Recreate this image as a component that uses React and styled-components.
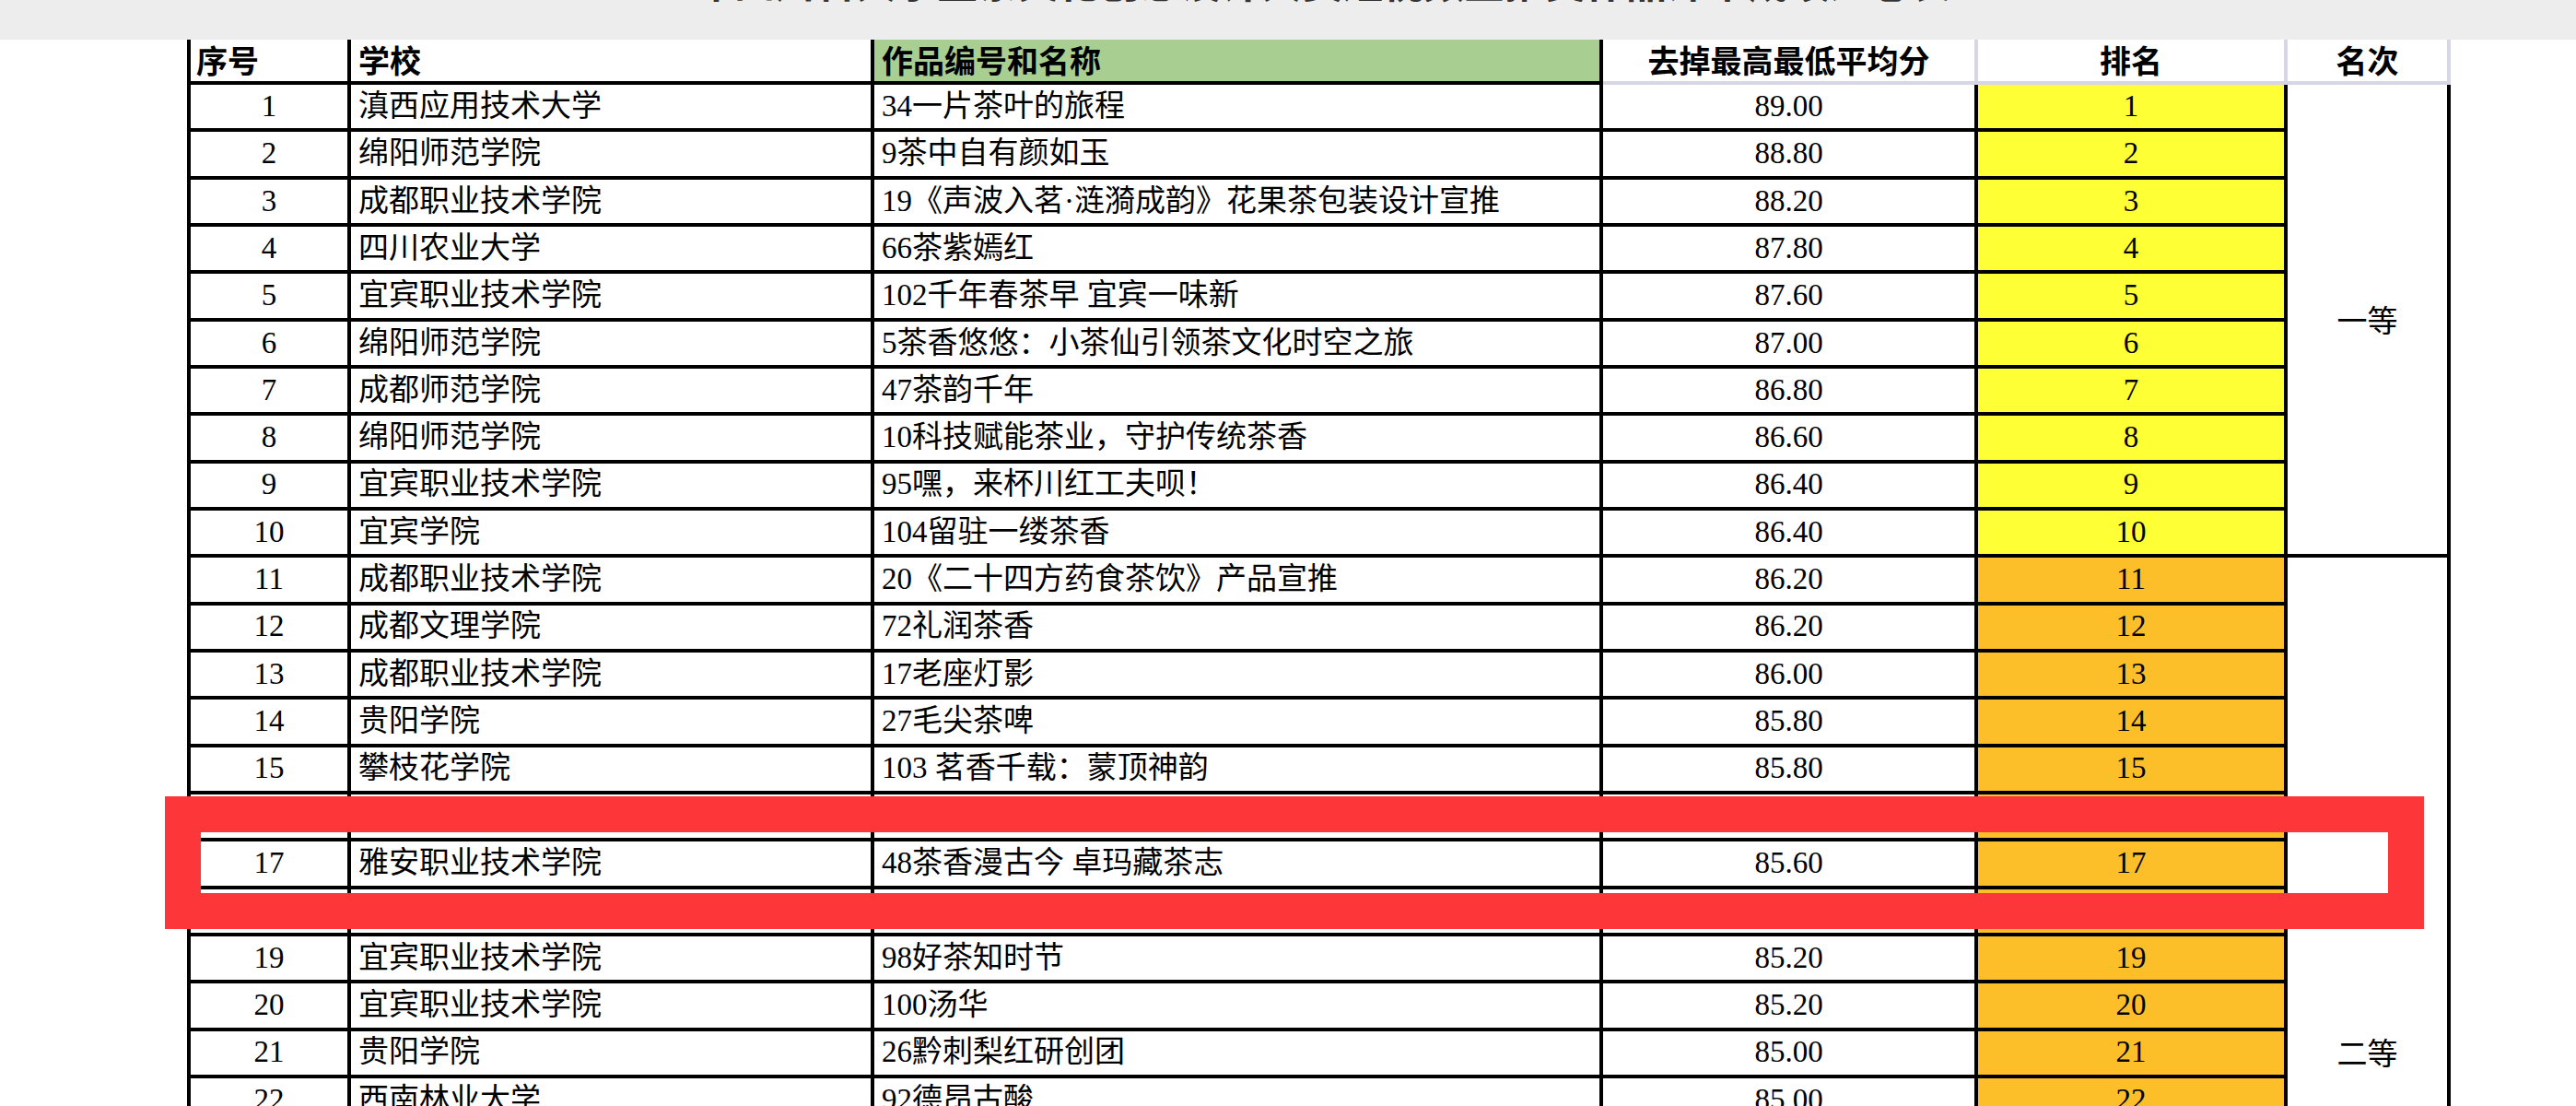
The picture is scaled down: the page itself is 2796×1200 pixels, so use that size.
import React from "react";
import styled, { createGlobalStyle } from "styled-components";

const GlobalStyle = createGlobalStyle`
  html, body {
    margin: 0;
    padding: 0;
    background: #fff;
    overflow: hidden;
  }
  body {
    font-family: "Liberation Serif", "Noto Sans CJK SC", serif;
    color: #000;
  }
`;

const LINE = "#000";
const SOFT = "#d6d6e4";

const rows = [
  { no: 1, school: "滇西应用技术大学", work: "34一片茶叶的旅程", score: "89.00" },
  { no: 2, school: "绵阳师范学院", work: "9茶中自有颜如玉", score: "88.80" },
  { no: 3, school: "成都职业技术学院", work: "19《声波入茗·涟漪成韵》花果茶包装设计宣推", score: "88.20" },
  { no: 4, school: "四川农业大学", work: "66茶紫嫣红", score: "87.80" },
  { no: 5, school: "宜宾职业技术学院", work: "102千年春茶早 宜宾一味新", score: "87.60" },
  { no: 6, school: "绵阳师范学院", work: "5茶香悠悠：小茶仙引领茶文化时空之旅", score: "87.00" },
  { no: 7, school: "成都师范学院", work: "47茶韵千年", score: "86.80" },
  { no: 8, school: "绵阳师范学院", work: "10科技赋能茶业，守护传统茶香", score: "86.60" },
  { no: 9, school: "宜宾职业技术学院", work: "95嘿，来杯川红工夫呗！", score: "86.40" },
  { no: 10, school: "宜宾学院", work: "104留驻一缕茶香", score: "86.40" },
  { no: 11, school: "成都职业技术学院", work: "20《二十四方药食茶饮》产品宣推", score: "86.20" },
  { no: 12, school: "成都文理学院", work: "72礼润茶香", score: "86.20" },
  { no: 13, school: "成都职业技术学院", work: "17老座灯影", score: "86.00" },
  { no: 14, school: "贵阳学院", work: "27毛尖茶啤", score: "85.80" },
  { no: 15, school: "攀枝花学院", work: "103 茗香千载：蒙顶神韵", score: "85.80" },
  { no: 16, hidden: true },
  { no: 17, school: "雅安职业技术学院", work: "48茶香漫古今 卓玛藏茶志", score: "85.60" },
  { no: 18, hidden: true },
  { no: 19, school: "宜宾职业技术学院", work: "98好茶知时节", score: "85.20" },
  { no: 20, school: "宜宾职业技术学院", work: "100汤华", score: "85.20" },
  { no: 21, school: "贵阳学院", work: "26黔刺梨红研创团", score: "85.00" },
  { no: 22, school: "西南林业大学", work: "92德昂古酸", score: "85.00" },
];

// merged 名次 cells: first row number -> label and how many rows it covers
const tiers = {
  1: { label: "一等", span: 10 },
  11: { label: "二等", span: 21 },
};

const Page = styled.div`
  position: relative;
  width: 2796px;
  height: 1200px;
  overflow: hidden;
  display: flex;
  flex-direction: column;
`;

const TopBar = styled.div`
  flex: none;
  height: 43px;
  background: #ededed;
  overflow: hidden;
  display: flex;
  justify-content: center;
`;

// only the very bottom of the scrolled-away title peeks out
const Title = styled.div`
  margin-top: -43px;
  padding-right: 30px;
  font: 700 44px/44px "Noto Sans CJK SC", sans-serif;
  color: #333;
  white-space: nowrap;
`;

const Sheet = styled.div`
  display: grid;
  grid-template-columns: 178px 568px 791px 407px 336px 177px;
  grid-template-rows: 49px;
  grid-auto-rows: 51.33px;
  margin-left: 203px;
  width: max-content;
`;

const Cell = styled.div`
  box-sizing: border-box;
  display: flex;
  align-items: center;
  justify-content: ${(p) => (p.$left ? "flex-start" : "center")};
  padding: 0 8px;
  font-size: 33px;
  line-height: 1.2;
  white-space: nowrap;
  overflow: hidden;
  background: ${(p) => p.$fill || "#fff"};
  border-right: 4px solid ${(p) => (p.$softRight ? SOFT : LINE)};
  border-bottom: 4px solid ${(p) => (p.$softBottom ? SOFT : LINE)};
  border-left: ${(p) => (p.$first ? `4px solid ${LINE}` : "none")};
`;

const HeadCell = styled(Cell)`
  font-family: "Noto Sans CJK SC", sans-serif;
  font-weight: 700;
  font-size: 34px;
  padding-left: ${(p) => (p.$first ? "6px" : "8px")};
`;

const TierCell = styled(Cell)`
  grid-row: span ${(p) => p.$span};
  font-family: "Noto Sans CJK SC", sans-serif;
`;

const Highlight = styled.div`
  position: absolute;
  left: 179px;
  top: 864px;
  width: 2452px;
  height: 144px;
  box-sizing: border-box;
  border: 39px solid #fd3639;
  pointer-events: none;
`;

const rankFill = (no) => (no <= 10 ? "#ffff36" : "#fcbf2a");

export default function App() {
  return (
    <Page>
      <GlobalStyle />
      <TopBar>
        <Title>2024年四川省大学生茶文化创意设计大赛短视频宣推类作品评审成绩汇总表</Title>
      </TopBar>
      <Sheet>
        <HeadCell $first $left>序号</HeadCell>
        <HeadCell $left>学校</HeadCell>
        <HeadCell $left $fill="#a9ce92">作品编号和名称</HeadCell>
        <HeadCell $softRight $softBottom>去掉最高最低平均分</HeadCell>
        <HeadCell $softRight $softBottom>排名</HeadCell>
        <HeadCell $softRight $softBottom>名次</HeadCell>

        {rows.map((r) => (
          <React.Fragment key={r.no}>
            <Cell $first>{r.hidden ? "" : r.no}</Cell>
            <Cell $left>{r.school}</Cell>
            <Cell $left>{r.work}</Cell>
            <Cell>{r.score}</Cell>
            <Cell $fill={rankFill(r.no)}>{r.hidden ? "" : r.no}</Cell>
            {tiers[r.no] && (
              <TierCell $span={tiers[r.no].span}>{tiers[r.no].label}</TierCell>
            )}
          </React.Fragment>
        ))}
      </Sheet>
      <Highlight />
    </Page>
  );
}
